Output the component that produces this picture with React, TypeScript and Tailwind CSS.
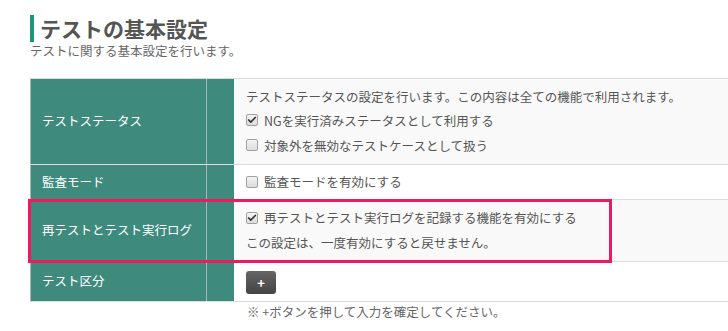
import { Check } from 'lucide-react';

const font = { fontFamily: '"Noto Sans CJK JP", "Noto Sans", sans-serif' };

function Box({ checked }: { checked?: boolean }) {
  return (
    <span className="mr-[6px] inline-flex h-[12px] w-[12px] shrink-0 items-center justify-center rounded-[2px] border border-[#a0a0a0] bg-gradient-to-b from-[#f4f4f4] to-[#dcdcdc]">
      {checked && <Check className="h-[10px] w-[10px] text-[#333]" strokeWidth={4} />}
    </span>
  );
}

function Row({
  label,
  height,
  shaded,
  children,
}: {
  label: string;
  height: string;
  shaded?: boolean;
  children: React.ReactNode;
}) {
  return (
    <div className={`flex border-b border-[#dcdcdc] ${height}`}>
      <div className="flex w-[177px] shrink-0 items-center border-l border-r border-[#a9b8b4] bg-[#3e8b7e] pl-[11px] text-[12.5px] text-white">
        {label}
      </div>
      <div className="w-[27px] shrink-0 bg-[#3e8b7e]" />
      <div className={`flex flex-1 flex-col justify-center pl-[12px] ${shaded ? 'bg-[#f9f9f9]' : 'bg-white'}`}>
        {children}
      </div>
    </div>
  );
}

export default function App() {
  return (
    <div className="h-[331px] w-[728px] overflow-hidden bg-white text-[#555]" style={font}>
      {/* Header */}
      <div className="pl-[30px] pt-[14px]">
        <div className="flex items-center">
          <span className="h-[27px] w-[4px] bg-[#1f9479]" />
          <h1 className="ml-[6px] text-[21px] leading-[28px] font-bold text-[#555]">テストの基本設定</h1>
        </div>
        <p className="mt-[1px] text-[12.5px] leading-[16px] text-[#666]">テストに関する基本設定を行います。</p>
      </div>

      {/* Table */}
      <div className="mt-[19px] ml-[30px] border-t border-[#dcdcdc]">
        <Row label="テストステータス" height="h-[86px]" shaded>
          <div className="text-[12.5px] leading-[22px]">テストステータスの設定を行います。この内容は全ての機能で利用されます。</div>
          <div className="flex items-center text-[12.5px] leading-[25px]">
            <Box checked />
            NGを実行済みステータスとして利用する
          </div>
          <div className="flex items-center text-[12.5px] leading-[25px]">
            <Box />
            対象外を無効なテストケースとして扱う
          </div>
        </Row>
        <Row label="監査モード" height="h-[35px]">
          <div className="flex items-center text-[12.5px] leading-[22px]">
            <Box />
            監査モードを有効にする
          </div>
        </Row>
        <div className="relative">
          <Row label="再テストとテスト実行ログ" height="h-[62px]" shaded>
            <div className="flex items-center text-[12.5px] leading-[24px]">
              <Box checked />
              再テストとテスト実行ログを記録する機能を有効にする
            </div>
            <div className="text-[12.5px] leading-[26px]">この設定は、一度有効にすると戻せません。</div>
          </Row>
          <div className="absolute -top-[1px] -left-[2px] h-[64px] w-[584px] border-[3px] border-[#ec1a5e]" />
        </div>
        <Row label="テスト区分" height="h-[40px]">
          <div className="pt-[2px]">
            <button className="flex h-[23px] w-[30px] items-center justify-center rounded-[3px] bg-gradient-to-b from-[#666] to-[#444] text-[13px] font-bold text-white">
              +
            </button>
          </div>
        </Row>
        <div className="pl-[217px] text-[12.5px] leading-[20px] text-[#666]">※ +ボタンを押して入力を確定してください。</div>
      </div>
    </div>
  );
}
